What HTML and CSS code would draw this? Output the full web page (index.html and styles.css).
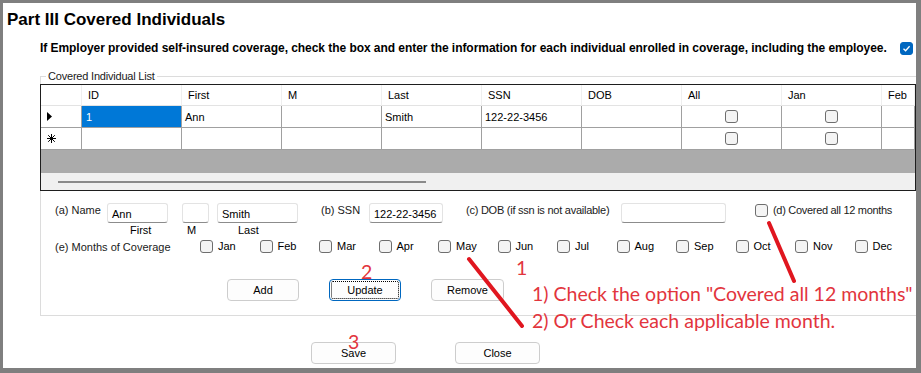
FILE: index.html
```html
<!DOCTYPE html>
<html lang="en">
<head>
  <meta charset="UTF-8" />
  <title>Part III Covered Individuals</title>
  <link rel="stylesheet" href="styles.css">
</head>
<body>
  <div class="window">
    <h1 class="title">Part III Covered Individuals</h1>
    <div class="intro">
      <span>If Employer provided self-insured coverage, check the box and enter the information for each individual enrolled in coverage, including the employee.</span>
      <span class="check checked">
        <svg width="9" height="9" viewBox="0 0 9 9"><path d="M1.5 4.8 L3.6 6.8 L7.6 2.2" fill="none" stroke="#fff" stroke-width="1.3"/></svg>
      </span>
    </div>

    <fieldset class="group">
      <legend>Covered Individual List</legend>
      <div class="grid">
        <div class="cell head"></div>
        <div class="cell head">ID</div>
        <div class="cell head">First</div>
        <div class="cell head">M</div>
        <div class="cell head">Last</div>
        <div class="cell head">SSN</div>
        <div class="cell head">DOB</div>
        <div class="cell head">All</div>
        <div class="cell head">Jan</div>
        <div class="cell head">Feb</div>

        <div class="cell rowhead">
          <svg width="5" height="9" viewBox="0 0 5 9"><path d="M0 0 L5 4.5 L0 9 Z" fill="#000"/></svg>
        </div>
        <div class="cell selected">1</div>
        <div class="cell">Ann</div>
        <div class="cell"></div>
        <div class="cell">Smith</div>
        <div class="cell">122-22-3456</div>
        <div class="cell"></div>
        <div class="cell center"><span class="check"></span></div>
        <div class="cell center"><span class="check"></span></div>
        <div class="cell"></div>

        <div class="cell rowhead">
          <svg width="9" height="9" viewBox="0 0 9 9"><path d="M4.5 0 V9 M0 4.5 H9 M1.2 1.2 L7.8 7.8 M7.8 1.2 L1.2 7.8" stroke="#000" stroke-width="1"/></svg>
        </div>
        <div class="cell"></div>
        <div class="cell"></div>
        <div class="cell"></div>
        <div class="cell"></div>
        <div class="cell"></div>
        <div class="cell"></div>
        <div class="cell center"><span class="check"></span></div>
        <div class="cell center"><span class="check"></span></div>
        <div class="cell"></div>

        <div class="grid-empty"></div>
        <div class="grid-scroll"><div class="thumb"></div></div>
      </div>

      <div class="form">
        <div class="row row-name">
          <span class="label w-name">(a) Name</span>
          <span class="textbox w-first">Ann</span>
          <span class="textbox w-mid"></span>
          <span class="textbox w-last">Smith</span>
          <span class="label w-ssn">(b) SSN</span>
          <span class="textbox w-ssnbox">122-22-3456</span>
          <span class="label w-dob">(c) DOB (if ssn is not available)</span>
          <span class="textbox w-dobbox"></span>
          <span class="check all12"></span>
          <span class="label tight">(d) Covered all 12 months</span>
        </div>
        <div class="row row-sub">
          <span class="sub-first">First</span>
          <span class="sub-mid">M</span>
          <span>Last</span>
        </div>
        <div class="row row-months">
          <span class="label w-months">(e) Months of Coverage</span>
          <label class="month"><span class="check"></span>Jan</label>
          <label class="month"><span class="check"></span>Feb</label>
          <label class="month"><span class="check"></span>Mar</label>
          <label class="month"><span class="check"></span>Apr</label>
          <label class="month"><span class="check"></span>May</label>
          <label class="month"><span class="check"></span>Jun</label>
          <label class="month"><span class="check"></span>Jul</label>
          <label class="month"><span class="check"></span>Aug</label>
          <label class="month"><span class="check"></span>Sep</label>
          <label class="month"><span class="check"></span>Oct</label>
          <label class="month"><span class="check"></span>Nov</label>
          <label class="month"><span class="check"></span>Dec</label>
        </div>
        <div class="row row-actions">
          <button class="btn">Add</button>
          <button class="btn focused">Update</button>
          <button class="btn wide">Remove</button>
        </div>
      </div>
    </fieldset>

    <div class="footer">
      <button class="btn big">Save</button>
      <button class="btn big">Close</button>
    </div>
  </div>

  <div class="notes">
    <svg class="marks" width="921" height="373" viewBox="0 0 921 373">
      <line x1="469" y1="259" x2="522" y2="326" />
      <line x1="769" y1="223" x2="794" y2="281" />
    </svg>
    <span class="note num-1">1</span>
    <span class="note num-2">2</span>
    <span class="note num-3">3</span>
    <span class="note step-1">1) Check the option "Covered all 12 months"</span>
    <span class="note step-2">2) Or Check each applicable month.</span>
  </div>
</body>
</html>
```

FILE: styles.css
```css
body {
  margin: 0;
  width: 921px;
  height: 373px;
  overflow: hidden;
  position: relative;
  background: #7f7f7f;
  font-family: 'Liberation Sans', Arial, sans-serif;
  font-size: 11px;
  color: #000;
}
.window {
  margin: 3px 0 0 3px;
  width: 913px;
  height: 365px;
  background: #fff;
  overflow: hidden;
}
.title {
  margin: 0;
  padding: 6px 0 0 4px;
  font-size: 17px;
  line-height: 22px;
  font-weight: bold;
}
.intro {
  display: flex;
  align-items: center;
  height: 14px;
  margin-top: 10px;
  padding-left: 37px;
  font-size: 12px;
  letter-spacing: -0.05px;
  font-weight: bold;
  line-height: 14px;
}
.intro .check {
  margin-left: auto;
  margin-right: 3px;
}
.check {
  display: inline-flex;
  align-items: center;
  justify-content: center;
  box-sizing: border-box;
  width: 13px;
  height: 13px;
  border: 1px solid #6e6e6e;
  border-radius: 3px;
  background: #f4f4f4;
  flex-shrink: 0;
}
.check.checked {
  background: #0067c0;
  border-color: #0067c0;
}
.group {
  margin: 14px 0 0 37px;
  padding: 0;
  width: 900px;
  border: 1px solid #dcdcdc;
  min-width: 0;
}
.group legend {
  margin-left: 5px;
  padding: 0 2px;
  line-height: 14px;
  letter-spacing: -0.2px;
  color: #1a1a1a;
}
.grid {
  display: grid;
  grid-template-columns: 41px repeat(8, 100px) 33px;
  grid-template-rows: 21px 22px 22px 23px 17px;
  width: 876px;
  box-sizing: border-box;
  margin: 1px 0 0 -1px;
  border: 1px solid #1e1e1e;
  background: #fff;
}
.cell {
  display: flex;
  align-items: center;
  box-sizing: border-box;
  padding-left: 3px;
  border-right: 1px solid #a0a0a0;
  border-bottom: 1px solid #a0a0a0;
  white-space: nowrap;
  overflow: hidden;
}
.cell.head {
  padding-left: 6px;
  border-right-color: #efefef;
  border-bottom-color: #e3e3e3;
}
.cell.rowhead {
  padding-left: 6px;
}
.cell.center {
  justify-content: center;
  padding-left: 0;
}
.cell.selected {
  background: #0078d7;
  color: #fff;
  padding-left: 4px;
}
.grid-empty {
  grid-column: 1 / -1;
  background: #ababab;
}
.grid-scroll {
  grid-column: 1 / -1;
  background: #f0f0f0;
  padding: 8px 0 0 17px;
  box-sizing: border-box;
}
.thumb {
  width: 368px;
  height: 2px;
  background: #8a8a8a;
}
.form {
  padding: 12px 0 14px 14px;
}
.row {
  display: flex;
}
.row-name {
  align-items: flex-start;
  height: 20px;
}
.label {
  line-height: 14px;
  white-space: nowrap;
  color: #1a1a1a;
}
.label.tight {
  letter-spacing: -0.3px;
}
.w-name { width: 52px; }
.w-ssn { width: 48px; margin-left: 23px; }
.w-dob { width: 155px; margin-left: 23px; letter-spacing: -0.25px; }
.w-months { width: 145px; }
.textbox {
  box-sizing: border-box;
  height: 20px;
  padding: 3px 0 0 4px;
  line-height: 14px;
  background: #fff;
  border: 1px solid #e3e3e3;
  border-bottom-color: #8c8c8c;
  border-radius: 3px;
}
.w-first { width: 61px; }
.w-mid { width: 27px; margin-left: 14px; }
.w-last { width: 81px; margin-left: 8px; }
.w-ssnbox { width: 74px; }
.w-dobbox { width: 105px; }
.all12 {
  margin: 1px 5px 0 29px;
}
.row-sub {
  height: 12px;
  margin-top: 1px;
  line-height: 12px;
}
.sub-first { margin-left: 75px; width: 57px; }
.sub-mid { width: 51px; }
.row-months {
  align-items: center;
  height: 13px;
  margin-top: 4px;
  line-height: 13px;
}
.month {
  display: flex;
  align-items: center;
  gap: 5px;
  width: 59.5px;
  flex-shrink: 0;
}
.row-actions {
  margin-top: 26px;
  padding-left: 172px;
  gap: 30px;
}
.btn {
  box-sizing: border-box;
  width: 72px;
  height: 22px;
  padding: 0;
  font-family: 'Liberation Sans', Arial, sans-serif;
  font-size: 11px;
  color: #000;
  background: #fdfdfd;
  border: 1px solid #cdcdcd;
  border-radius: 4px;
}
.btn.wide { width: 73px; }
.btn.focused {
  border-color: #0067c0;
  outline: 1px dotted #000;
  outline-offset: -3px;
}
.footer {
  display: flex;
  gap: 59px;
  margin-top: 26px;
  padding-left: 308px;
}
.btn.big {
  width: 85px;
  height: 22px;
}
.notes {
  position: absolute;
  left: 0;
  top: 0;
  width: 921px;
  height: 373px;
  pointer-events: none;
}
.marks {
  position: absolute;
  left: 0;
  top: 0;
}
.marks line {
  stroke: #e0161f;
  stroke-width: 4;
  stroke-linecap: round;
}
.note {
  position: absolute;
  font-family: Lato, 'Open Sans', sans-serif;
  font-size: 19.5px;
  line-height: 24px;
  color: #e2353d;
  white-space: nowrap;
}
.num-1 { left: 516px; top: 256px; }
.num-2 { left: 361px; top: 260px; }
.num-3 { left: 348px; top: 330px; }
.step-1 { left: 532px; top: 282px; }
.step-2 { left: 532px; top: 309px; }
```
